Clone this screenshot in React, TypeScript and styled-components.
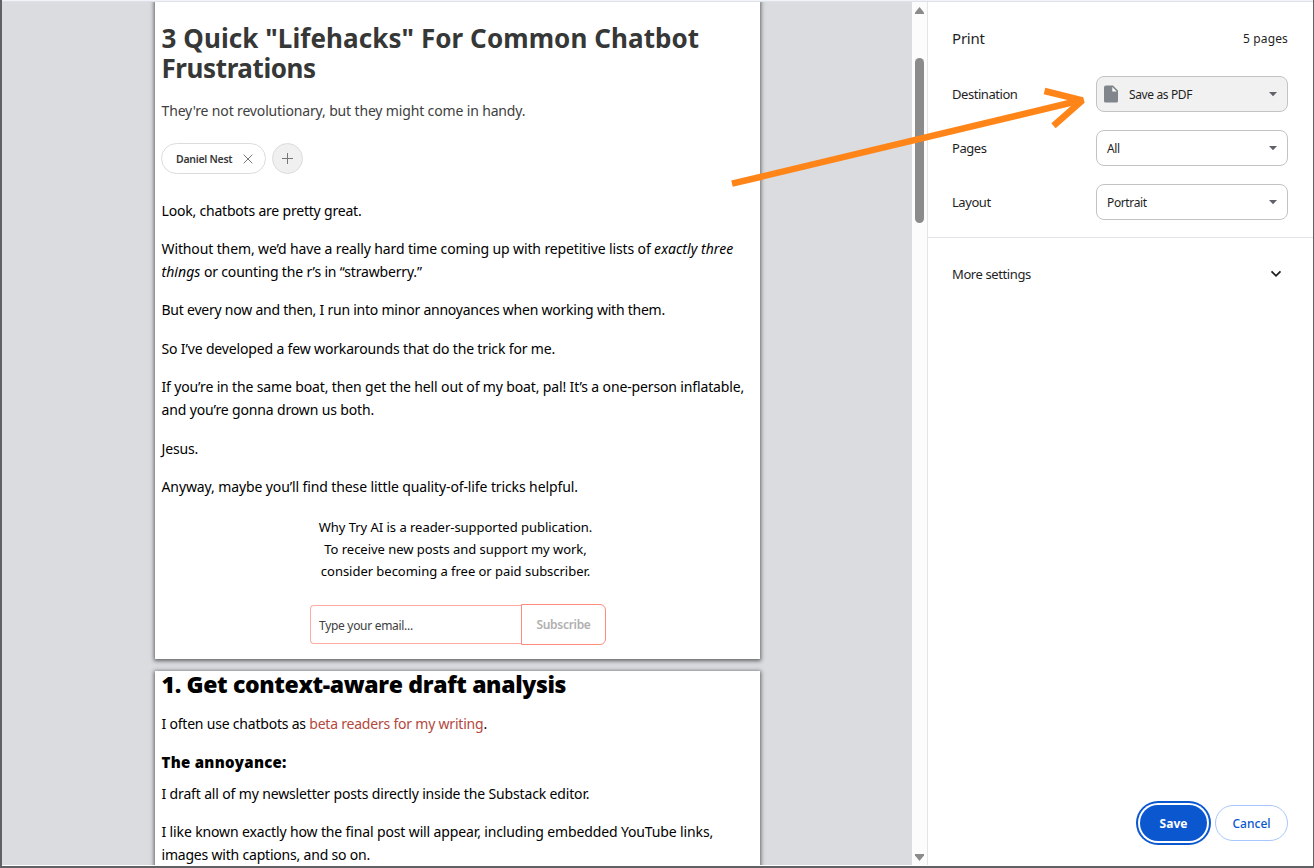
import React from "react";
import styled, { createGlobalStyle, ThemeProvider } from "styled-components";

const theme = {
  colors: {
    frame: "#5f6164",
    preview: "#dadce0",
    text: "#000",
    title: "#363737",
    label: "#1f1f1f",
    primary: "#0b57d0",
    link: "#b4483d",
  },
  font: `"Noto Sans", "Open Sans", sans-serif`,
};

const GlobalStyle = createGlobalStyle`
  *, *::before {
    box-sizing: border-box;
  }
  body {
    margin: 0;
    overflow: hidden;
    font-family: ${theme.font};
  }
  p, h1, h2, h3 {
    margin: 0;
  }
`;

const Window = styled.div`
  display: flex;
  position: relative;
  width: 1314px;
  height: 868px;
  overflow: hidden;
  background: #fff;
  border: solid ${({ theme }) => theme.colors.frame};
  border-width: 0 1px 2px 2px;
  &::before {
    content: "";
    position: absolute;
    left: 0;
    right: 0;
    top: 0;
    height: 2px;
    background: #f1f3f9;
    border-bottom: 1px solid #dfe1e8;
  }
`;

const Preview = styled.main`
  display: flex;
  flex-direction: column;
  gap: 12px;
  width: 910px;
  height: 865px;
  padding-left: 153px;
  overflow: hidden;
  background: ${({ theme }) => theme.colors.preview};
`;

const Sheet = styled.article<{ height: number }>`
  flex: none;
  width: 605px;
  height: ${({ height }) => height}px;
  padding: 0 6.5px;
  background: #fff;
  color: ${({ theme }) => theme.colors.text};
  box-shadow: 0 1px 4px 1px rgba(0, 0, 0, 0.55);
`;

const Title = styled.h1`
  padding-top: 23px;
  font-size: 26px;
  line-height: 30px;
  font-weight: 700;
  color: ${({ theme }) => theme.colors.title};
`;

const Subtitle = styled.p`
  margin-top: 17px;
  font-size: 14px;
  line-height: 22px;
  color: #404040;
`;

const Authors = styled.div`
  display: flex;
  gap: 6px;
  margin: 21px 0 24.7px -0.5px;
`;

const Chip = styled.div`
  display: flex;
  align-items: center;
  justify-content: space-between;
  width: 105px;
  height: 31px;
  padding: 0 12px 0 14px;
  border: 1px solid #dcdcdc;
  border-radius: 16px;
  font-size: 10.5px;
  font-weight: 600;
  color: ${({ theme }) => theme.colors.title};
`;

const AddButton = styled.div`
  display: flex;
  align-items: center;
  justify-content: center;
  width: 31px;
  height: 31px;
  border: 1px solid #dcdcdc;
  border-radius: 50%;
  background: #f0f0f0;
`;

const Paragraph = styled.p`
  margin-bottom: 15.1px;
  font-size: 14px;
  line-height: 23.2px;
  & a {
    color: ${({ theme }) => theme.colors.link};
  }
  & em {
    letter-spacing: 0.05px;
  }
`;

const Line = styled.span<{ spacing?: number }>`
  display: block;
  white-space: nowrap;
  letter-spacing: ${({ spacing = 0 }) => spacing}px;
`;

const Pitch = styled.div`
  margin-top: 17.8px;
  padding-right: 4px;
  text-align: center;
  font-size: 13px;
  line-height: 22px;
`;

const SubscribeForm = styled.div`
  display: flex;
  align-items: center;
  width: 296px;
  margin: 22px auto 0 148.5px;
`;

const EmailField = styled.div`
  flex: 1;
  height: 39px;
  padding-left: 8px;
  border: 1px solid #ffaba2;
  border-right: none;
  border-radius: 4px 0 0 4px;
  font-size: 12px;
  line-height: 40px;
  color: #404040;
`;

const SubscribeButton = styled.div`
  width: 85px;
  height: 41px;
  border: 1.5px solid #ff8a7e;
  border-radius: 0 6px 6px 0;
  font-size: 12px;
  font-weight: 600;
  line-height: 40px;
  text-align: center;
  color: #b0b0b0;
`;

const SectionTitle = styled.h2`
  margin-bottom: 14px;
  font-family: "Open Sans", sans-serif;
  font-size: 23px;
  font-weight: 800;
  line-height: 27px;
`;

const SubHeading = styled.h3`
  padding-top: 1.5px;
  margin-bottom: 9.8px;
  font-family: "Open Sans", sans-serif;
  font-size: 15px;
  font-weight: 800;
  line-height: 20px;
`;

const Scrollbar = styled.div`
  display: flex;
  flex-direction: column;
  align-items: center;
  width: 15px;
  height: 865px;
  padding: 7px 0 4px;
  background: #fcfcfc;
`;

const Thumb = styled.div`
  width: 9px;
  height: 165px;
  margin: 44px 0 auto;
  border-radius: 5px;
  background: #8b8b8b;
`;

const Sidebar = styled.aside`
  display: flex;
  flex-direction: column;
  flex: 1;
  height: 865px;
  padding: 2px 0 24px;
  border-left: 1px solid #e4e5e8;
  font-size: 13px;
  color: ${({ theme }) => theme.colors.label};
`;

const SidebarHeader = styled.header`
  display: flex;
  align-items: center;
  justify-content: space-between;
  height: 72px;
  margin-bottom: 2px;
  padding: 0 25px 0 24px;
  font-size: 12px;
  & h1 {
    font-size: 15px;
    font-weight: 400;
  }
`;

const Settings = styled.div`
  display: flex;
  flex-direction: column;
  gap: 18px;
  padding: 0 25px 17px 24px;
  border-bottom: 1px solid #e4e5e8;
`;

const SettingRow = styled.div`
  display: flex;
  align-items: center;
  justify-content: space-between;
`;

const Select = styled.div<{ filled?: boolean }>`
  display: flex;
  align-items: center;
  gap: 11px;
  width: 192px;
  height: 36px;
  padding: 0 10px 0 ${({ filled }) => (filled ? 7 : 10)}px;
  border: 1px solid #c2c3c5;
  border-radius: 8px;
  background: ${({ filled }) => (filled ? "#f1f1f1" : "#fff")};
  font-size: 12px;
  & .arrow {
    margin-left: auto;
  }
`;

const MoreSettings = styled.div`
  display: flex;
  align-items: center;
  justify-content: space-between;
  height: 72px;
  padding: 0 31px 0 24px;
`;

const Actions = styled.footer`
  display: flex;
  justify-content: flex-end;
  gap: 8px;
  margin-top: auto;
  padding-right: 25px;
`;

const Button = styled.button<{ primary?: boolean }>`
  width: ${({ primary }) => (primary ? 67 : 73)}px;
  height: 36px;
  padding: 0;
  border: ${({ primary }) => (primary ? "none" : "1px solid #a8c7fa")};
  border-radius: 18px;
  background: ${({ primary, theme }) => (primary ? theme.colors.primary : "#fff")};
  box-shadow: ${({ primary, theme }) =>
    primary ? `0 0 0 2px #fff, 0 0 0 4px ${theme.colors.primary}` : "none"};
  font-family: inherit;
  font-size: 12px;
  font-weight: ${({ primary }) => (primary ? 700 : 500)};
  color: ${({ primary, theme }) => (primary ? "#fff" : theme.colors.primary)};
`;

const Pointer = styled.svg`
  position: absolute;
  left: 728px;
  top: 80px;
`;

const CaretIcon = () => (
  <svg className="arrow" width="8" height="5" viewBox="0 0 8 5">
    <path d="M0 0h8L4 4.200z" fill="#5f6368" />
  </svg>
);

const FileIcon = () => (
  <svg width="14" height="18" viewBox="0 0 14 18">
    <path d="M2 .5h7L14 5.500v10.500a1.500 1.500 0 0 1-1.500 1.500H1.500A1.500 1.500 0 0 1 0 16V2.500a2 2 0 0 1 2-2z" fill="#80868b" />
    <path d="M8.300 2v4.400h4.400z" fill="#fff" />
  </svg>
);

const settings = [
  { label: "Destination", value: "Save as PDF", icon: true },
  { label: "Pages", value: "All" },
  { label: "Layout", value: "Portrait" },
];

const App: React.FC = () => {
  return (
    <ThemeProvider theme={theme}>
      <GlobalStyle />
      <Window>
        <Preview>
          <Sheet height={659}>
            <Title>
              <Line spacing={0.08}>3 Quick "Lifehacks" For Common Chatbot</Line>
              <Line spacing={-0.4}>Frustrations</Line>
            </Title>
            <Subtitle>
              <Line spacing={-0.15}>They're not revolutionary, but they might come in handy.</Line>
            </Subtitle>
            <Authors>
              <Chip>
                <Line spacing={-0.27}>Daniel Nest</Line>
                <svg width="10" height="10" viewBox="0 0 10 10" stroke="#777" fill="none">
                  <path d="M.7.7l8.600 8.600M9.300.7L.7 9.300" />
                </svg>
              </Chip>
              <AddButton>
                <svg width="11" height="11" viewBox="0 0 11 11" stroke="#777" fill="none">
                  <path d="M5.500 0v11M0 5.500h11" />
                </svg>
              </AddButton>
            </Authors>
            <Paragraph>
              <Line spacing={-0.2}>Look, chatbots are pretty great.</Line>
            </Paragraph>
            <Paragraph>
              <Line spacing={-0.122}>
                Without them, we’d have a really hard time coming up with repetitive lists of <em>exactly three</em>
              </Line>
              <Line spacing={-0.17}>
                <em>things</em> or counting the r’s in “strawberry.”
              </Line>
            </Paragraph>
            <Paragraph>
              <Line spacing={-0.23}>But every now and then, I run into minor annoyances when working with them.</Line>
            </Paragraph>
            <Paragraph>
              <Line spacing={-0.155}>So I’ve developed a few workarounds that do the trick for me.</Line>
            </Paragraph>
            <Paragraph>
              <Line spacing={-0.14}>
                If you’re in the same boat, then get the hell out of my boat, pal! It’s a one-person inflatable,
              </Line>
              <Line spacing={-0.145}>and you’re gonna drown us both.</Line>
            </Paragraph>
            <Paragraph>
              <Line spacing={-0.15}>Jesus.</Line>
            </Paragraph>
            <Paragraph>
              <Line spacing={-0.11}>Anyway, maybe you’ll find these little quality-of-life tricks helpful.</Line>
            </Paragraph>
            <Pitch>
              <Line spacing={-0.03}>Why Try AI is a reader-supported publication.</Line>
              <Line spacing={-0.03}>To receive new posts and support my work,</Line>
              <Line spacing={-0.03}>consider becoming a free or paid subscriber.</Line>
            </Pitch>
            <SubscribeForm>
              <EmailField>
                <Line spacing={-0.3}>Type your email...</Line>
              </EmailField>
              <SubscribeButton>
                <Line spacing={-0.3}>Subscribe</Line>
              </SubscribeButton>
            </SubscribeForm>
          </Sheet>
          <Sheet height={400}>
            <SectionTitle>
              <Line spacing={-0.35}>1. Get context-aware draft analysis</Line>
            </SectionTitle>
            <Paragraph>
              <Line spacing={-0.21}>
                I often use chatbots as <a>beta readers for my writing</a>.
              </Line>
            </Paragraph>
            <SubHeading>
              <Line spacing={0.28}>The annoyance:</Line>
            </SubHeading>
            <Paragraph>
              <Line spacing={-0.15}>I draft all of my newsletter posts directly inside the Substack editor.</Line>
            </Paragraph>
            <Paragraph>
              <Line spacing={-0.135}>
                I like known exactly how the final post will appear, including embedded YouTube links,
              </Line>
              <Line spacing={-0.2}>images with captions, and so on.</Line>
            </Paragraph>
          </Sheet>
        </Preview>
        <Scrollbar>
          <svg width="9" height="7" viewBox="0 0 9 7">
            <path d="M4.500 0L9 5.500V7H0V5.500z" fill="#8b8b8b" />
          </svg>
          <Thumb />
          <svg width="9" height="7" viewBox="0 0 9 7">
            <path d="M4.500 7L9 1.500V0H0v1.500z" fill="#8b8b8b" />
          </svg>
        </Scrollbar>
        <Sidebar>
          <SidebarHeader>
            <h1>
              <Line spacing={-0.2}>Print</Line>
            </h1>
            <Line spacing={0.15}>5 pages</Line>
          </SidebarHeader>
          <Settings>
            {settings.map((item) => (
              <SettingRow key={item.label}>
                <Line spacing={-0.45}>{item.label}</Line>
                <Select filled={item.icon}>
                  {item.icon && <FileIcon />}
                  <Line spacing={-0.37}>{item.value}</Line>
                  <CaretIcon />
                </Select>
              </SettingRow>
            ))}
          </Settings>
          <MoreSettings>
            <Line spacing={-0.4}>More settings</Line>
            <svg width="12" height="8" viewBox="0 0 12 8" fill="none" stroke="#1f1f1f" strokeWidth="1.800">
              <path d="M1.500 1.300L6 5.800l4.500-4.500" />
            </svg>
          </MoreSettings>
          <Actions>
            <Button primary>Save</Button>
            <Button>Cancel</Button>
          </Actions>
        </Sidebar>
        <Pointer width="364" height="114" viewBox="730 80 364 114" fill="none" stroke="#ff8519" strokeWidth="6.500">
          <path d="M732 183.700L1080 100.500" />
          <path d="M1044.500 91L1082.500 100.300L1053.500 125.700" strokeLinejoin="bevel" />
        </Pointer>
      </Window>
    </ThemeProvider>
  );
};

export default App;
